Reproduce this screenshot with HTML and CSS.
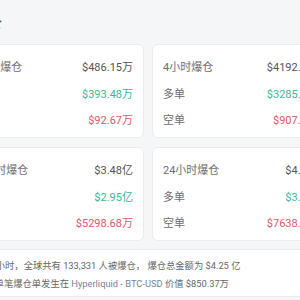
FILE: index.html
```html
<!DOCTYPE html>
<html lang="zh-CN">
<head>
  <meta charset="UTF-8" />
  <meta name="viewport" content="width=device-width, initial-scale=1.0"/>
  <title>爆仓数据</title>
  <link rel="stylesheet" href="styles.css">
</head>
<body>
  <div class="liq-page">
    <div class="liq-header">
      <h2>爆仓</h2>
    </div>

    <div class="liq-grid">
      <div class="liq-card">
        <div class="liq-row">
          <span class="liq-label">1小时爆仓</span>
          <span class="liq-value">$486.15万</span>
        </div>
        <div class="liq-row">
          <span class="liq-label">多单</span>
          <span class="liq-value long">$393.48万</span>
        </div>
        <div class="liq-row">
          <span class="liq-label">空单</span>
          <span class="liq-value short">$92.67万</span>
        </div>
      </div>

      <div class="liq-card">
        <div class="liq-row">
          <span class="liq-label">4小时爆仓</span>
          <span class="liq-value">$4192.93万</span>
        </div>
        <div class="liq-row">
          <span class="liq-label">多单</span>
          <span class="liq-value long">$3285.41万</span>
        </div>
        <div class="liq-row">
          <span class="liq-label">空单</span>
          <span class="liq-value short">$907.52万</span>
        </div>
      </div>

      <div class="liq-card">
        <div class="liq-row">
          <span class="liq-label">12小时爆仓</span>
          <span class="liq-value">$3.48亿</span>
        </div>
        <div class="liq-row">
          <span class="liq-label">多单</span>
          <span class="liq-value long">$2.95亿</span>
        </div>
        <div class="liq-row">
          <span class="liq-label">空单</span>
          <span class="liq-value short">$5298.68万</span>
        </div>
      </div>

      <div class="liq-card">
        <div class="liq-row">
          <span class="liq-label">24小时爆仓</span>
          <span class="liq-value">$4.25亿</span>
        </div>
        <div class="liq-row">
          <span class="liq-label">多单</span>
          <span class="liq-value long">$3.49亿</span>
        </div>
        <div class="liq-row">
          <span class="liq-label">空单</span>
          <span class="liq-value short">$7638.52万</span>
        </div>
      </div>
    </div>

    <div class="liq-summary">
      <p>近24小时，全球共有 133,331 人被爆仓， 爆仓总金额为 $4.25 亿</p>
      <p>最大单笔爆仓单发生在 <span class="liq-market">Hyperliquid - BTC-USD</span> 价值 $850.37万</p>
    </div>
  </div>
</body>
</html>
```

FILE: styles.css
```css
body {
  margin: 0;
  background: #f5f6f7;
  font-family: Roboto, "Noto Sans CJK SC", "Noto Sans", sans-serif;
  overflow: hidden;
}

.liq-page {
  width: 374px;
  margin-left: -39px;
}

.liq-header {
  height: 44px;
  padding-left: 9px;
  display: flex;
  align-items: center;
}

.liq-header h2 {
  margin: 0;
  font-size: 16px;
  font-weight: 500;
  color: #555;
}

.liq-grid {
  display: grid;
  grid-template-columns: 183px 183px;
  column-gap: 8px;
  row-gap: 9px;
}

.liq-card {
  background: #ffffff;
  border: 1px solid #ececee;
  border-radius: 6px;
  padding: 8px 10px 7px;
  height: 94px;
  box-sizing: border-box;
}

.liq-row {
  display: flex;
  justify-content: space-between;
  align-items: center;
  height: 26.5px;
  font-size: 11px;
}

.liq-label {
  color: #6e6e6e;
}

.liq-value {
  color: #555;
}

.liq-value.long {
  color: #3bb89a;
}

.liq-value.short {
  color: #e0566b;
}

.liq-summary {
  margin-top: 8px;
  background: #ffffff;
  border: 1px solid #ececee;
  border-radius: 6px;
  padding: 7px 12px 6px 14px;
  height: 48px;
  box-sizing: border-box;
}

.liq-summary p {
  margin: 0;
  font-size: 9.3px;
  line-height: 17.5px;
  color: #666;
  white-space: nowrap;
}

.liq-market {
  color: #7a8290;
}
```
